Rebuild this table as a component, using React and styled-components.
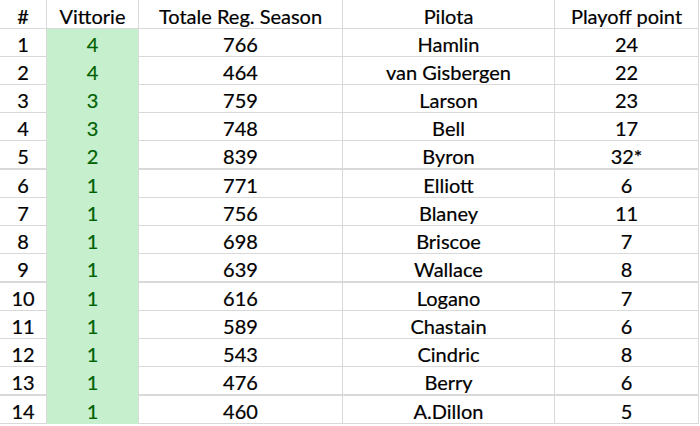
import React from 'react';
import styled, {createGlobalStyle} from 'styled-components';

const GlobalStyle = createGlobalStyle`
  html, body {
    margin: 0;
    padding: 0;
    background: #ffffff;
  }
  body {
    font-family: Lato, "Open Sans", sans-serif;
  }
`;

const Sheet = styled.div`
  width: 700px;
  height: 426px;
  overflow: hidden;
  background: #ffffff;
`;

const Row = styled.div`
  display: grid;
  grid-template-columns: 47px 92px 204px 212px 144px;
  height: ${p => p.$header ? 29 : 28 + (p.$thick ? 1 : 0)}px;
`;

const Cell = styled.div`
  display: flex;
  align-items: center;
  justify-content: center;
  box-sizing: border-box;
  padding-top: 3px;
  border-right: 1px solid #d9d9d9;
  border-bottom: ${p => p.$thick ? 2 : 1}px solid #d9d9d9;
  font-size: 20px;
  line-height: 1;
  color: #000000;
  white-space: nowrap;
  -webkit-text-stroke: 0.2px currentColor;
`;

const WinCell = styled(Cell)`
  background: ${p => p.$header ? '#ffffff' : '#c6efce'};
  color: ${p => p.$header ? '#000000' : '#006100'};
  border-bottom-color: ${p => p.$header ? '#d9d9d9' : '#c6efce'};
`;

const rows = [
    [1, 4, 766, 'Hamlin', '24'],
    [2, 4, 464, 'van Gisbergen', '22'],
    [3, 3, 759, 'Larson', '23'],
    [4, 3, 748, 'Bell', '17'],
    [5, 2, 839, 'Byron', '32*'],
    [6, 1, 771, 'Elliott', '6'],
    [7, 1, 756, 'Blaney', '11'],
    [8, 1, 698, 'Briscoe', '7'],
    [9, 1, 639, 'Wallace', '8'],
    [10, 1, 616, 'Logano', '7'],
    [11, 1, 589, 'Chastain', '6'],
    [12, 1, 543, 'Cindric', '8'],
    [13, 1, 476, 'Berry', '6'],
    [14, 1, 460, 'A.Dillon', '5'],
];

const thickAfter = [5, 9, 13];

const App = () => {
    return (
        <Sheet>
            <GlobalStyle/>
            <Row $header>
                <Cell>#</Cell>
                <WinCell $header>Vittorie</WinCell>
                <Cell>Totale Reg. Season</Cell>
                <Cell>Pilota</Cell>
                <Cell>Playoff point</Cell>
            </Row>
            {rows.map(([pos, wins, total, name, pts]) => {
                const thick = thickAfter.includes(pos);
                return (
                    <Row key={pos} $thick={thick}>
                        <Cell $thick={thick}>{pos}</Cell>
                        <WinCell $thick={thick}>{wins}</WinCell>
                        <Cell $thick={thick}>{total}</Cell>
                        <Cell $thick={thick}>{name}</Cell>
                        <Cell $thick={thick}>{pts}</Cell>
                    </Row>
                );
            })}
        </Sheet>
    );
};

export default App;
